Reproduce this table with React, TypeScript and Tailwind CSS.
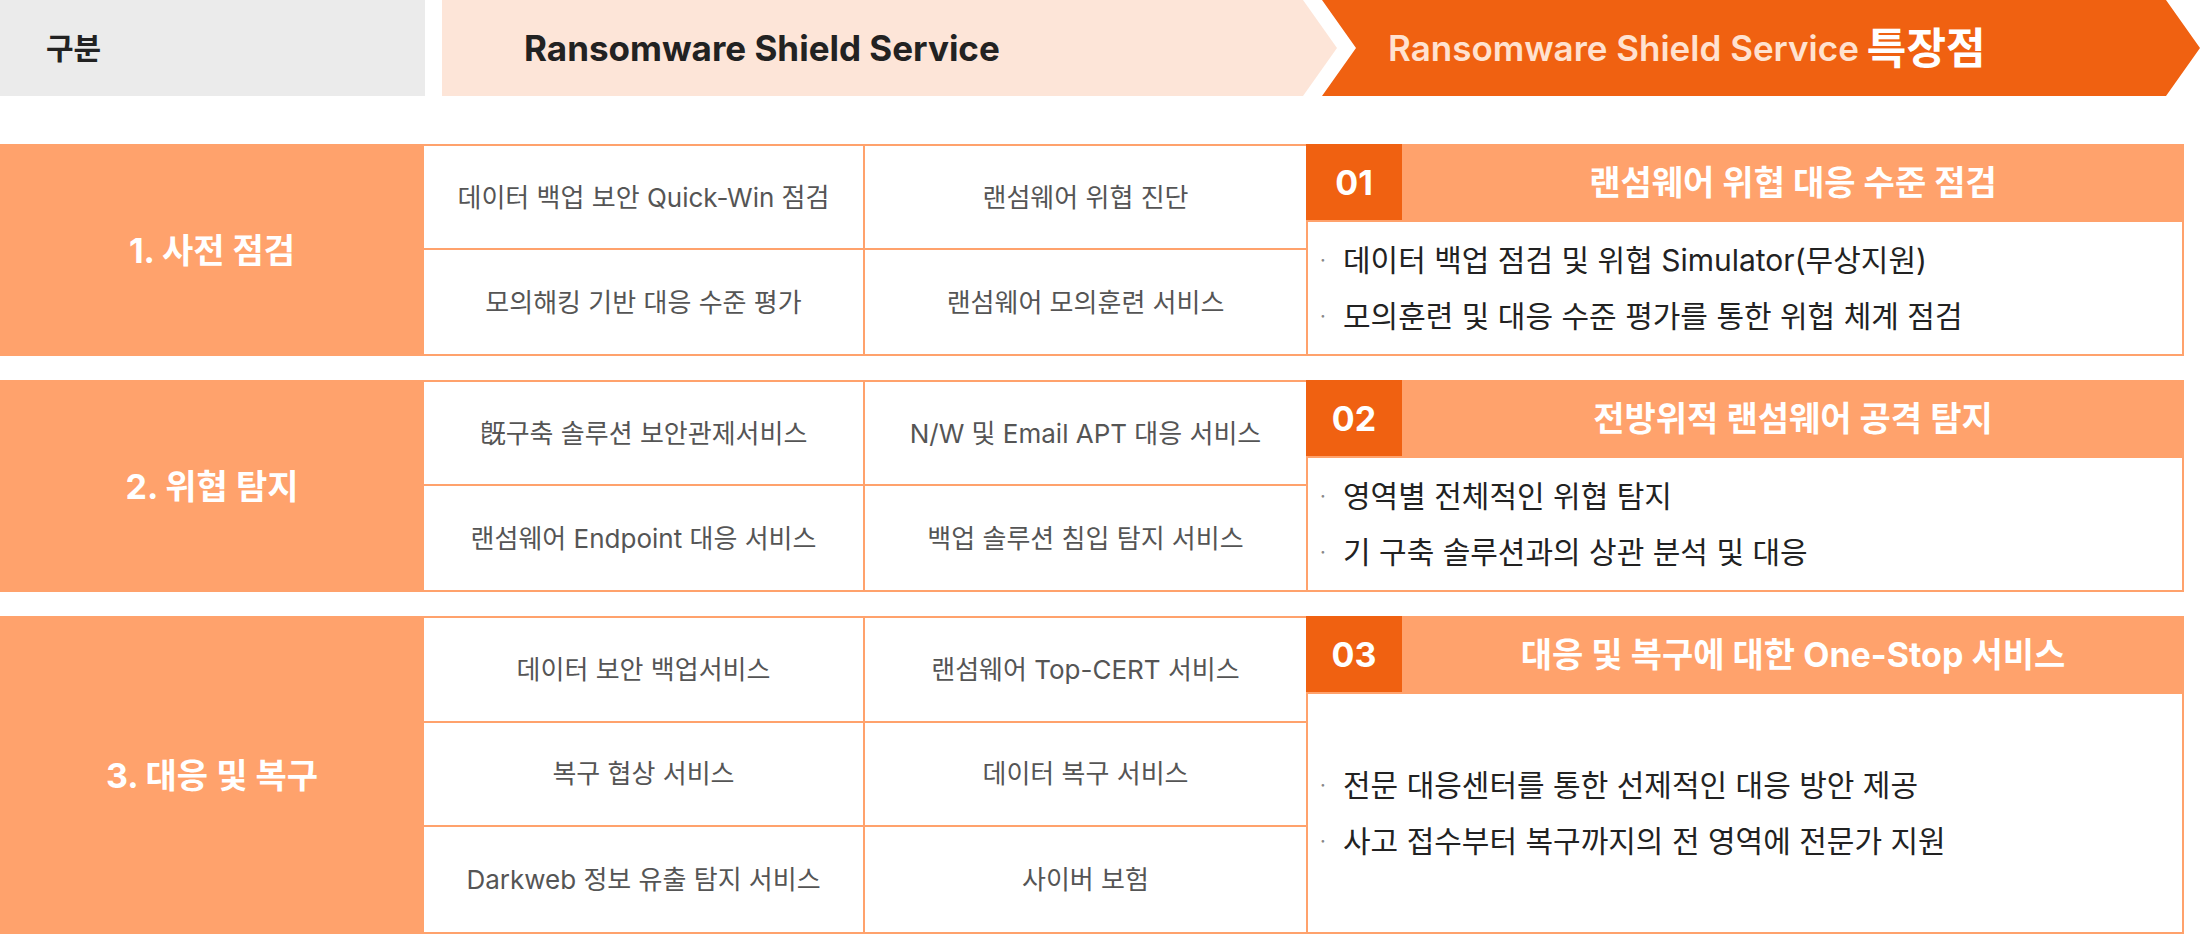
import React from "react";

type Section = {
  label: string;
  cells: string[];
  no: string;
  title: string;
  points: string[];
  height: string;
  rows: string;
};

const sections: Section[] = [
  {
    label: "1. 사전 점검",
    cells: [
      "데이터 백업 보안 Quick-Win 점검",
      "랜섬웨어 위협 진단",
      "모의해킹 기반 대응 수준 평가",
      "랜섬웨어 모의훈련 서비스",
    ],
    no: "01",
    title: "랜섬웨어 위협 대응 수준 점검",
    points: [
      "데이터 백업 점검 및 위협 Simulator(무상지원)",
      "모의훈련 및 대응 수준 평가를 통한 위협 체계 점검",
    ],
    height: "h-[212px]",
    rows: "grid-rows-2",
  },
  {
    label: "2. 위협 탐지",
    cells: [
      "旣구축 솔루션 보안관제서비스",
      "N/W 및 Email APT 대응 서비스",
      "랜섬웨어 Endpoint 대응 서비스",
      "백업 솔루션 침입 탐지 서비스",
    ],
    no: "02",
    title: "전방위적 랜섬웨어 공격 탐지",
    points: ["영역별 전체적인 위협 탐지", "기 구축 솔루션과의 상관 분석 및 대응"],
    height: "h-[212px]",
    rows: "grid-rows-2",
  },
  {
    label: "3. 대응 및 복구",
    cells: [
      "데이터 보안 백업서비스",
      "랜섬웨어 Top-CERT 서비스",
      "복구 협상 서비스",
      "데이터 복구 서비스",
      "Darkweb 정보 유출 탐지 서비스",
      "사이버 보험",
    ],
    no: "03",
    title: "대응 및 복구에 대한 One-Stop 서비스",
    points: [
      "전문 대응센터를 통한 선제적인 대응 방안 제공",
      "사고 접수부터 복구까지의 전 영역에 전문가 지원",
    ],
    height: "h-[318px]",
    rows: "grid-rows-3",
  },
];

const font = "font-['Inter','Noto_Sans_CJK_KR',sans-serif]";

const Row = ({ s }: { s: Section }) => {
  const rowCount = s.cells.length / 2;
  return (
    <div className={`flex w-[2184px] ${s.height}`}>
      <div className="w-[424px] shrink-0 bg-[#ffa26c] flex items-center justify-center text-white text-[34px] font-bold">
        {s.label}
      </div>
      <div
        className={`w-[882px] shrink-0 grid grid-cols-2 ${s.rows} border-y-2 border-[#ffa26c] bg-white`}
      >
        {s.cells.map((c, i) => {
          const lastRow = Math.floor(i / 2) === rowCount - 1;
          return (
            <div
              key={c}
              className={`flex items-center justify-center text-[26px] text-[#555555] border-[#ffa26c] ${
                i % 2 === 0 ? "border-r-2" : ""
              } ${lastRow ? "" : "border-b-2"}`}
            >
              {c}
            </div>
          );
        })}
      </div>
      <div className="flex-1 flex flex-col">
        <div className="h-[78px] shrink-0 flex items-start bg-[#ffa26c]">
          <div className="w-[96px] h-[76px] bg-[#f06111] flex items-center justify-center text-white text-[34px] font-bold">
            {s.no}
          </div>
          <div className="flex-1 h-[76px] flex items-center justify-center text-white text-[34px] font-bold">
            {s.title}
          </div>
        </div>
        <div className="flex-1 bg-white border-2 border-t-0 border-[#ffa26c] flex flex-col justify-center gap-[24px] pl-[12px]">
          {s.points.map((p) => (
            <div key={p} className="flex items-center text-[30px] leading-[32px] text-[#222222]">
              <span className="text-[#888888] text-[20px] w-[23px]">·</span>
              {p}
            </div>
          ))}
        </div>
      </div>
    </div>
  );
};

const App = () => {
  return (
    <div className={`w-[2200px] h-[934px] bg-white overflow-hidden ${font}`}>
      <header className="flex h-[96px]">
        <div className="w-[425px] shrink-0 bg-[#ebebeb] flex items-center pl-[46px] text-[30px] font-bold text-[#222222]">
          구분
        </div>
        <div className="ml-[17px] w-[895px] shrink-0 bg-[#fde5d8] flex items-center pl-[82px] text-[35px] font-bold text-[#222222] [clip-path:polygon(0_0,861px_0,895px_48px,861px_96px,0_96px)]">
          Ransomware Shield Service
        </div>
        <div className="-ml-[15px] w-[878px] shrink-0 bg-[#f06111] flex items-center pl-[66px] text-[#ffe2d0] [clip-path:polygon(0_0,844px_0,878px_48px,844px_96px,0_96px,34px_48px)]">
          <span className="text-[35px] font-semibold">Ransomware Shield Service</span>
          <span className="ml-[8px] text-[43px] font-bold text-white">특장점</span>
        </div>
      </header>
      <div className="mt-[48px] flex flex-col gap-[24px]">
        {sections.map((s) => (
          <Row key={s.no} s={s} />
        ))}
      </div>
    </div>
  );
};

export default App;
